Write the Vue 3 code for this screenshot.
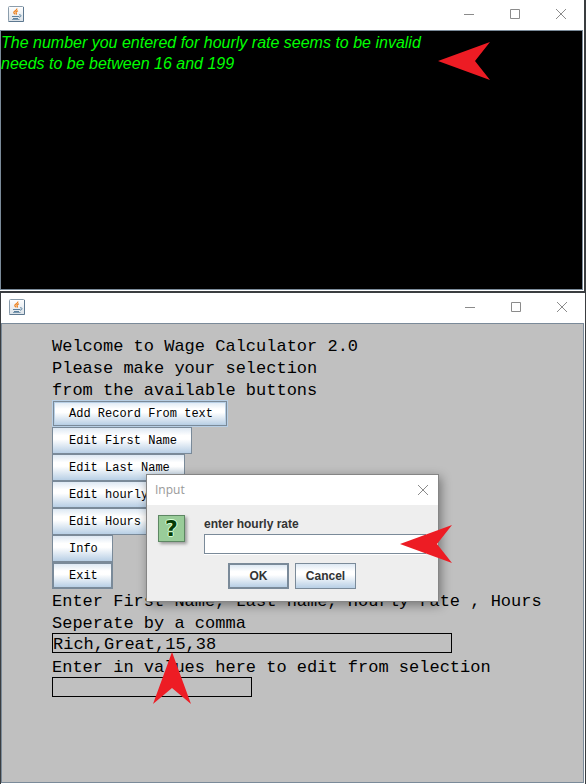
<script setup>
import { ref } from 'vue'

const consoleLines = [
  'The number you entered for hourly rate seems to be invalid',
  'needs to be between 16 and 199',
]
const intro = [
  'Welcome to Wage Calculator 2.0',
  'Please make your selection',
  'from the available buttons',
]
const actions = [
  { label: 'Add Record From text', kind: 'focused' },
  { label: 'Edit First Name', kind: '' },
  { label: 'Edit Last Name', kind: '' },
  { label: 'Edit hourly rate', kind: '' },
  { label: 'Edit Hours Worked', kind: '' },
  { label: 'Info', kind: '' },
  { label: 'Exit', kind: 'default' },
]
const windows = ['console', 'calculator']
const record = ref('Rich,Great,15,38')
const editValue = ref('')
const hourlyRate = ref('')
</script>

<template>
  <main class="desktop">
    <section v-for="name in windows" :key="name" class="window" :class="name">
      <header class="titlebar">
        <svg class="java" viewBox="0 0 16 16" width="16" height="16" aria-hidden="true">
          <defs>
            <linearGradient :id="'tile-' + name" x1="0" y1="0" x2="0" y2="1">
              <stop offset="0" stop-color="#fff" />
              <stop offset="1" stop-color="#dbe2e8" />
            </linearGradient>
          </defs>
          <rect x=".5" y=".5" width="15" height="15" rx="1" :fill="`url(#tile-${name})`" stroke="#8b9dac" />
          <path d="M.5 15.500h15V1" fill="none" stroke="#5d7890" />
          <path d="M8.800 2.500C9.400 4.500 5.500 4.800 5.800 6.600c.1.700 1 1 1.200 1.800M10 4.800C8.200 5.300 7.600 6 8.200 6.900c.4.700.2 1.100-.2 1.600" fill="none" stroke="#ee8422" stroke-width="1.300" />
          <path d="M4 10.500h7M5 12.500h5" fill="none" stroke="#5b809d" />
          <path d="M4 13.500h7.500" fill="none" stroke="#7d9ab1" />
          <path d="M11 8.800c2.800-.4 2.600 2.200 0 2.400" fill="none" stroke="#5b809d" />
        </svg>
        <div class="controls">
          <button type="button" aria-label="Minimize">
            <svg viewBox="0 0 10 10" width="10" height="10"><path d="M0 5.500h10" /></svg>
          </button>
          <button type="button" aria-label="Maximize">
            <svg viewBox="0 0 10 10" width="10" height="10"><path d="M.5.5h9v9h-9z" /></svg>
          </button>
          <button type="button" aria-label="Close">
            <svg viewBox="0 0 10 10" width="10" height="10"><path d="M0 0l10 10M10 0L0 10" /></svg>
          </button>
        </div>
      </header>

      <div v-if="name === 'console'" class="output">
        <p v-for="line in consoleLines" :key="line">{{ line }}</p>
      </div>

      <form v-else class="form" @submit.prevent>
        <p v-for="line in intro" :key="line" class="line">{{ line }}</p>
        <div class="actions">
          <button v-for="a in actions" :key="a.label" type="button" class="metal" :class="a.kind">
            {{ a.label }}
          </button>
        </div>
        <label for="record">
          <span class="line">Enter First Name, Last name, Hourly rate , Hours</span>
          <span class="line">Seperate by a comma</span>
        </label>
        <input id="record" v-model="record" class="field record" type="text" />
        <label for="edit" class="line">Enter in values here to edit from selection</label>
        <input id="edit" v-model="editValue" class="field edit" type="text" />
      </form>
    </section>

    <form class="dialog" role="dialog" aria-labelledby="dialog-title" @submit.prevent>
      <header class="dialog-bar">
        <span id="dialog-title">Input</span>
        <button type="button" aria-label="Close dialog">
          <svg viewBox="0 0 10 10" width="10" height="10"><path d="M0 0l10 10M10 0L0 10" /></svg>
        </button>
      </header>
      <div class="dialog-body">
        <div class="prompt">
          <span class="question" aria-hidden="true">?</span>
          <div class="entry">
            <label for="rate">enter hourly rate</label>
            <input id="rate" v-model="hourlyRate" type="text" />
          </div>
        </div>
        <div class="choices">
          <button type="submit" class="metal default">OK</button>
          <button type="button" class="metal">Cancel</button>
        </div>
      </div>
    </form>

    <svg class="arrow arrow-message" viewBox="0 0 52 38" width="52" height="38" aria-hidden="true"><path d="M0 19L52 0L37 19L52 38z" /></svg>
    <svg class="arrow arrow-rate" viewBox="0 0 52 38" width="52" height="38" aria-hidden="true"><path d="M0 19L52 0L37 19L52 38z" /></svg>
    <svg class="arrow arrow-record" viewBox="0 0 38 52" width="38" height="52" aria-hidden="true"><path d="M19 0L38 52L19 36L0 52z" /></svg>
  </main>
</template>

<style>
body {
  margin: 0;
  background: #3a3d40;
}
</style>

<style scoped>
* {
  box-sizing: border-box;
}
.desktop {
  position: relative;
  display: flex;
  flex-direction: column;
  gap: 2px;
  min-height: 100vh;
  background: #3a3d40;
}
p {
  margin: 0;
}
button {
  padding: 0;
  border: 0;
  background: none;
}
.window {
  display: flex;
  flex-direction: column;
  background: #fff;
}
.console {
  margin-right: 2px;
}
.calculator {
  flex: 1;
  margin: 0 1px;
}
.titlebar {
  display: flex;
  align-items: center;
  justify-content: space-between;
  height: 30px;
  padding: 0 18px 2px 8px;
}
.java {
  display: block;
}
.controls {
  display: flex;
  gap: 36px;
}
.controls button,
.dialog-bar button {
  display: grid;
  width: 10px;
  height: 10px;
}
.controls path,
.dialog-bar path {
  fill: none;
  stroke: #8b8b8b;
}
.output {
  min-height: 260px;
  margin-right: 1px;
  margin-bottom: 1px;
  padding-top: 1px;
  border: 1px solid #7a8a99;
  background: #000;
  color: #0f0;
  font: italic 16px/21px "Liberation Sans", Arial, sans-serif;
}
.form {
  display: flex;
  flex: 1;
  flex-direction: column;
  align-items: flex-start;
  margin: 0 1px 1px 0;
  padding: 10px 50px;
  border: 1px solid #7a8a99;
  background: #c0c0c0;
}
.line,
.field {
  color: #000;
  font: 17px/18px "Liberation Mono", "Courier New", monospace;
  white-space: nowrap;
}
.line {
  display: block;
  height: 22px;
  padding-top: 4px;
}
.actions {
  display: flex;
  flex-direction: column;
  align-items: flex-start;
}
.metal {
  height: 27px;
  padding: 1px 14px 0 16px;
  border: 1px solid #7a8a99;
  background: linear-gradient(#dde8f3 0%, #fff 30%, #fff 45%, #b8cfe5 100%);
  color: #000;
  font: 12px/20px "Liberation Mono", "Courier New", monospace;
  white-space: nowrap;
}
.metal.default {
  border-width: 2px;
  padding: 1px 13px 0 15px;
}
.metal.focused {
  height: 25px;
  margin: 1px;
  padding: 1px 13px 0 15px;
  outline: 1px solid #b8cfe5;
  box-shadow: inset 0 0 0 1px #b8cfe5;
}
.field {
  height: 20px;
  padding: 3px 0 0;
  border: 1px solid #000;
  border-radius: 0;
  background: transparent;
  outline: 0;
}
.record {
  width: 400px;
  margin-bottom: 2px;
}
.edit {
  width: 200px;
}
.dialog {
  position: absolute;
  top: 474px;
  left: 146px;
  width: 293px;
  border: 1px solid #858585;
  background: #eee;
  box-shadow: 2px 3px 10px rgba(0, 0, 0, 0.4);
}
.dialog-bar {
  display: flex;
  align-items: center;
  justify-content: space-between;
  height: 30px;
  padding: 0 10px 0 8px;
  background: #fff;
  color: #999;
  font: 12px/16px "Open Sans", "Noto Sans", sans-serif;
}
.dialog-body {
  padding: 10px 12px 12px 11px;
}
.prompt {
  display: flex;
  gap: 19px;
}
.question {
  width: 27px;
  height: 27px;
  border: 1px solid #5d8763;
  background: #9c9;
  box-shadow: 2px 2px 3px rgba(0, 0, 0, 0.35);
  color: #053d05;
  font: bold 22px/25px "DejaVu Sans", sans-serif;
  text-align: center;
  text-shadow: 1px 0 #d5ffd5, -1px 0 #d5ffd5, 0 1px #d5ffd5, 0 -1px #d5ffd5;
}
.entry {
  display: flex;
  flex: 1;
  flex-direction: column;
  padding-top: 1px;
}
.entry label,
.choices .metal {
  color: #333;
  font: bold 12px/17px "Liberation Sans", Arial, sans-serif;
}
.entry input {
  width: 100%;
  height: 20px;
  margin-top: 1px;
  padding: 0 2px;
  border: 1px solid #7a8a99;
  border-radius: 0;
  outline: 0;
  background: #fff;
  box-shadow: 0 1px #fff;
}
.choices {
  display: flex;
  justify-content: center;
  gap: 6px;
  margin-top: 9px;
}
.choices .metal {
  width: 61px;
  height: 26px;
  padding: 0;
}
.arrow {
  position: absolute;
  fill: #ed1c24;
}
.arrow-message {
  top: 42px;
  left: 438px;
}
.arrow-rate {
  top: 525px;
  left: 400px;
}
.arrow-record {
  top: 652px;
  left: 153px;
}
</style>
